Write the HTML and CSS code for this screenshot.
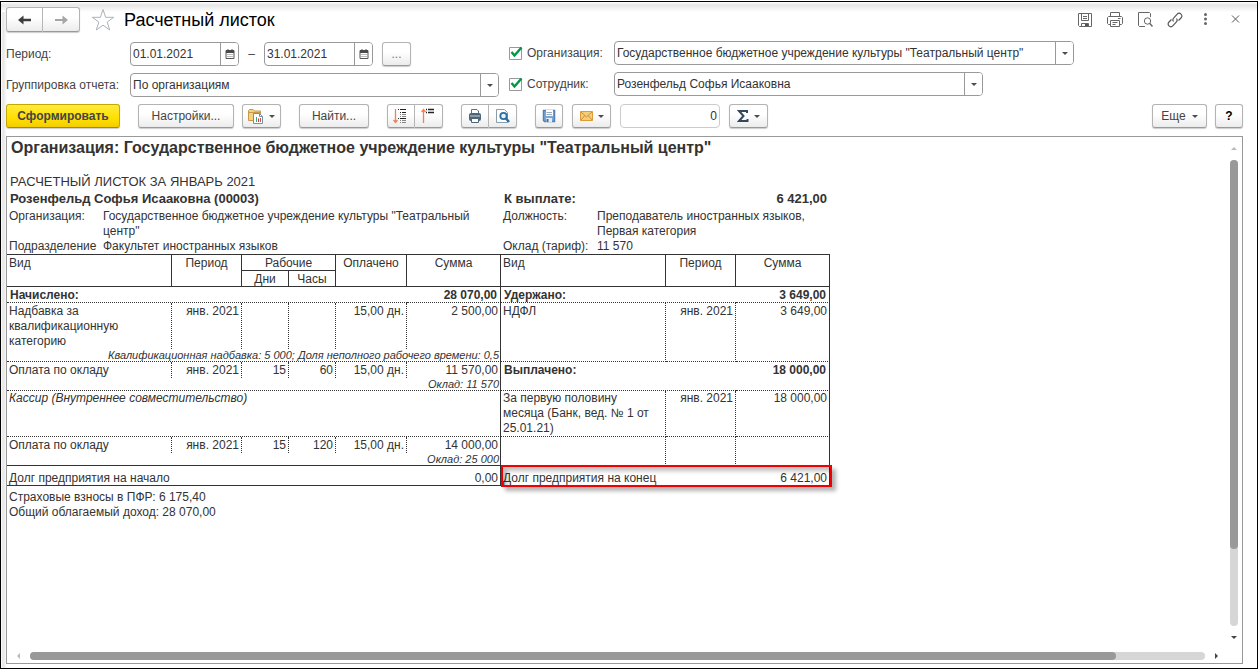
FILE: index.html
```html
<!DOCTYPE html>
<html lang="ru">
<head>
<meta charset="utf-8">
<title>Расчетный листок</title>
<link rel="stylesheet" href="styles.css">
</head>
<body>
<main class="window">
  <header class="titlebar">
    <div class="button-group">
      <button class="btn nav" aria-label="Назад"><svg width="16" height="12" viewBox="0 0 16 12"><path d="M1 6 6.500 1.500V4.800H14V7.200H6.500V10.500Z" fill="#3d3d3d"/></svg></button>
      <button class="btn nav" aria-label="Вперед"><svg width="16" height="12" viewBox="0 0 16 12"><path d="M15 6 9.500 1.500V5H2V7H9.500V10.500Z" fill="#a6a6a6"/></svg></button>
    </div>
    <button class="plain star" aria-label="В избранное"><svg width="24" height="24" viewBox="0 0 24 24"><path d="M12 1.500 14.600 9.300H22.700L16.200 14.100 18.700 22 12 17.200 5.300 22 7.800 14.100 1.300 9.300H9.400Z" fill="#fff" stroke="#a9b2bc"/></svg></button>
    <h1 class="title">Расчетный листок</h1>
    <div class="window-tools">
      <button class="plain" aria-label="Сохранить"><svg width="16" height="16" viewBox="0 0 16 16" fill="none" stroke="#666"><path d="M1.500 1.500H14.500V14.500H2.500L1.500 13.500ZM4.500 1.500V8.500H11.500V1.500M6 4.500H10M6 6.500H10M4.500 14.500V11.500H11.500V14.500"/><path d="M8 12h3v2H8z" fill="#555" stroke="none"/></svg></button>
      <button class="plain" aria-label="Печать"><svg width="16" height="16" viewBox="0 0 16 16" fill="none" stroke="#666"><path d="M3.500 4.500V.500H12.500V4.500M3.500 12.500H1.500L.5 11.500V5.500L1.500 4.500H14.500L15.500 5.500V11.500L14.500 12.500H12.500M3.500 8.500H12.500V14.500H3.500ZM5.500 10.500H10.500M5.500 12.500H8.500M11 6.500H13.500"/></svg></button>
      <button class="plain" aria-label="Просмотр"><svg width="16" height="16" viewBox="0 0 16 16" fill="none" stroke="#666"><path d="M13.500 5V1.500L12.500.500H1.500V13.500L2.500 14.500H8"/><circle cx="10.500" cy="9" r="3.200"/><path d="M12.800 11.500 15.500 14.500" stroke-width="1.500"/></svg></button>
      <button class="plain" aria-label="Ссылка"><svg width="16" height="16" viewBox="0 0 16 16" fill="none" stroke="#555" stroke-width="1.200"><path d="M6.500 9.500C5.500 8.200 5.800 6.900 6.800 5.900L10 2.300C11.200 1 12.800 1 14 2.100 15.200 3.300 15.200 4.800 14 6L11.500 8.500M9.500 6.500C10.500 7.800 10.200 9.100 9.200 10.100L6 13.700C4.800 15 3.200 15 2 13.900.8 12.700.8 11.200 2 10L4.500 7.500"/></svg></button>
      <button class="plain" aria-label="Меню"><svg width="16" height="16" viewBox="0 0 16 16" fill="#666"><circle cx="8.500" cy="2.500" r="1.500"/><circle cx="8.500" cy="7" r="1.500"/><circle cx="8.500" cy="11.500" r="1.500"/></svg></button>
      <button class="plain" aria-label="Закрыть"><svg width="16" height="16" viewBox="0 0 16 16" stroke="#555"><path d="M5 3.500 12 10.500M12 3.500 5 10.500"/></svg></button>
    </div>
  </header>

  <form class="filters">
    <div class="filter-column main-filters">
      <div class="filter-row">
        <label class="name" for="from">Период:</label>
        <span class="field date"><input id="from" value="01.01.2021"><button type="button" aria-label="Календарь"><svg width="10" height="10" viewBox="0 0 10 10"><path d="M1 1.500H9V9.500H1ZM3 0V3M7 0V3" fill="none" stroke="#555"/><path d="M1 1h8v3H1z" fill="#4a4a4a"/><path d="M2.500 5.500h5M2.500 7.500h5" stroke="#777" stroke-dasharray="1 1"/></svg></button></span>
        <span class="dash">–</span>
        <span class="field date"><input id="to" aria-label="Конец периода" value="31.01.2021"><button type="button" aria-label="Календарь"><svg width="10" height="10" viewBox="0 0 10 10"><path d="M1 1.500H9V9.500H1ZM3 0V3M7 0V3" fill="none" stroke="#555"/><path d="M1 1h8v3H1z" fill="#4a4a4a"/><path d="M2.500 5.500h5M2.500 7.500h5" stroke="#777" stroke-dasharray="1 1"/></svg></button></span>
        <button type="button" class="btn more">...</button>
      </div>
      <div class="filter-row">
        <label class="name" for="group">Группировка отчета:</label>
        <span class="field combo"><select id="group"><option>По организациям</option></select><span class="drop"><i class="caret"></i></span></span>
      </div>
    </div>
    <div class="filter-column extra-filters">
      <div class="filter-row">
        <label class="check"><input type="checkbox" checked><span>Организация:</span></label>
        <span class="field combo organization"><input aria-label="Организация" value="Государственное бюджетное учреждение культуры &quot;Театральный центр&quot;"><button type="button" class="drop" aria-label="Выбрать"><i class="caret"></i></button></span>
      </div>
      <div class="filter-row">
        <label class="check"><input type="checkbox" checked><span>Сотрудник:</span></label>
        <span class="field combo employee"><input aria-label="Сотрудник" value="Розенфельд Софья Исааковна"><button type="button" class="drop" aria-label="Выбрать"><i class="caret"></i></button></span>
      </div>
    </div>
  </form>

  <div class="toolbar">
    <button class="btn primary">Сформировать</button>
    <div class="tools">
      <button class="btn settings">Настройки...</button>
      <button class="btn menu" aria-label="Варианты"><svg width="16" height="16" viewBox="0 0 16 16"><path d="M.5 12.500V2.500L1.500 1.500H5L6.500 3H12.500V12.500Z" fill="#f5d183" stroke="#c89a45"/><path d="M1 4.500H12" stroke="#c89a45"/><path d="M5.500 5.500H11.500L14.500 8.500V15.500H5.500Z" fill="#fff" stroke="#7890a5"/><path d="M11.500 5.500V8.500H14.500" fill="none" stroke="#7890a5"/><path d="M8.500 9V14" stroke="#3a7"/><path d="M10.500 10.500V14" stroke="#d33"/><path d="M12.500 10V14" stroke="#b55"/></svg><i class="caret"></i></button>
    </div>
    <button class="btn find">Найти...</button>
    <div class="button-group">
      <button class="btn icon" aria-label="Развернуть группы"><svg width="16" height="16" viewBox="0 0 16 16"><path d="M2.500 1V14M.5 12 2.500 14.500 4.500 12" fill="none" stroke="#f0824a" stroke-width="1.300"/><path d="M5 1.500H6M7 1.500H13M7 4.500H8M9 4.500H13" stroke="#222"/><path d="M7 6.500H8M9 6.500H13M7 8.500H8M9 8.500H13" stroke="#888"/><path d="M5 10.500H6M7 10.500H13" stroke="#222"/><path d="M7 12.500H8M9 12.500H13M7 14.500H8M9 14.500H13" stroke="#888"/></svg></button>
      <button class="btn icon" aria-label="Свернуть группы"><svg width="16" height="16" viewBox="0 0 16 16"><path d="M2.500 15V2M.5 4 2.500 1.500 4.500 4" fill="none" stroke="#f0824a" stroke-width="1.300"/><path d="M5 1.500H6M7 1.500H13M5 4.500H6M7 4.500H13" stroke="#222" stroke-width="1.400"/></svg></button>
    </div>
    <div class="button-group">
      <button class="btn icon" aria-label="Печать"><svg width="16" height="16" viewBox="0 0 16 16"><path d="M4.500 6V1.500H10L11.500 3V6" fill="#fff" stroke="#5b7386"/><rect x="2" y="5" width="12" height="8" rx="2" fill="#4d6578"/><path d="M3 8H13" stroke="#c2d4e2"/><path d="M4.500 10.500H11.500V14.500H4.500Z" fill="#fff" stroke="#4d6578"/></svg></button>
      <button class="btn icon" aria-label="Предварительный просмотр"><svg width="16" height="16" viewBox="0 0 16 16"><path d="M1.500 1.500H9.500L12.500 4.500V14.500H1.500Z" fill="#fff" stroke="#8b9cab"/><circle cx="8.500" cy="8" r="3.200" fill="#e4f3fb" stroke="#2b6f9d" stroke-width="1.800"/><path d="M11 10.500 14 14" stroke="#2b6f9d" stroke-width="2.500"/></svg></button>
    </div>
    <div class="tools values">
      <button class="btn icon" aria-label="Сохранить отчет"><svg width="14" height="14" viewBox="0 0 14 14"><path d="M1.500 1.500H12.500V12.500H2.500L1.500 11.500Z" fill="#78a8d5" stroke="#5580b5" stroke-width="1.500"/><path d="M4 1h7v6H4z" fill="#fff"/><path d="M4.500 3.500H10M4.500 5.500H10" stroke="#9ab"/><path d="M4 9h6v4H4z" fill="#e5edf4"/><path d="M4.500 10h2v3h-2z" fill="#446a98"/></svg></button>
      <button class="btn menu" aria-label="Отправить"><svg width="13" height="10" viewBox="0 0 13 10"><path d="M.5.500H12.500V9.500H.5Z" fill="#f6cd7a" stroke="#dd9c37"/><path d="M1 1 6.500 6 12 1M1 9 4.800 4.500M12 9 8.200 4.500" fill="none" stroke="#d08f30"/></svg><i class="caret"></i></button>
      <input class="sum" aria-label="Сумма выделенных" value="0">
      <button class="btn menu" aria-label="Функция"><svg width="12" height="14" viewBox="0 0 12 14"><path d="M10 4V2H2L6.500 7 2 12H10.500V10" fill="none" stroke="#33485c" stroke-width="2"/></svg><i class="caret"></i></button>
    </div>
    <div class="tools trailing">
      <button class="btn other">Еще<i class="caret"></i></button>
      <button class="btn icon help">?</button>
    </div>
  </div>

  <section class="viewer">
    <article class="report">
      <h2 class="report-title">Организация: Государственное бюджетное учреждение культуры "Театральный центр"</h2>
      <p class="slip-title">РАСЧЕТНЫЙ ЛИСТОК ЗА ЯНВАРЬ 2021</p>
      <div class="slip-head">
        <strong class="person">Розенфельд Софья Исааковна (00003)</strong>
        <strong>К выплате:</strong><strong class="pay">6 421,00</strong>
        <span>Организация:</span><span class="org-name">Государственное бюджетное учреждение культуры "Театральный центр"</span>
        <span>Должность:</span><span>Преподаватель иностранных языков, Первая категория</span>
        <span>Подразделение</span><span>Факультет иностранных языков</span>
        <span>Оклад (тариф):</span><span>11 570</span>
      </div>
      <table class="slip">
        <colgroup><col class="kind"><col class="period"><col class="time"><col class="time"><col class="paid"><col class="amount"><col class="kind"><col class="period"><col class="amount"></colgroup>
        <thead>
          <tr><th rowspan="2" class="left">Вид</th><th rowspan="2">Период</th><th colspan="2">Рабочие</th><th rowspan="2">Оплачено</th><th rowspan="2">Сумма</th><th rowspan="2" class="left">Вид</th><th rowspan="2">Период</th><th rowspan="2">Сумма</th></tr>
          <tr><th>Дни</th><th>Часы</th></tr>
        </thead>
        <tbody>
          <tr class="total"><td colspan="5" class="open">Начислено:</td><td class="num edge">28 070,00</td><td colspan="2" class="open">Удержано:</td><td class="num edge">3 649,00</td></tr>
          <tr class="entry"><td class="wrap">Надбавка за квалификационную категорию</td><td class="num">янв. 2021</td><td></td><td></td><td class="num">15,00 дн.</td><td class="num edge">2 500,00</td><td rowspan="2" class="line">НДФЛ</td><td rowspan="2" class="num line">янв. 2021</td><td rowspan="2" class="num edge line">3 649,00</td></tr>
          <tr class="note"><td colspan="6" class="num edge">Квалификационная надбавка: 5 000; Доля неполного рабочего времени: 0,5</td></tr>
          <tr class="entry"><td>Оплата по окладу</td><td class="num">янв. 2021</td><td class="num">15</td><td class="num">60</td><td class="num">15,00 дн.</td><td class="num edge">11 570,00</td><td rowspan="2" colspan="2" class="open line strong">Выплачено:</td><td rowspan="2" class="num edge line strong">18 000,00</td></tr>
          <tr class="note"><td colspan="6" class="num edge">Оклад: 11 570</td></tr>
          <tr class="position"><td colspan="6" class="edge job">Кассир (Внутреннее совместительство)</td><td class="wrap">За первую половину месяца (Банк, вед. № 1 от 25.01.21)</td><td class="num">янв. 2021</td><td class="num edge">18 000,00</td></tr>
          <tr class="entry"><td>Оплата по окладу</td><td class="num">янв. 2021</td><td class="num">15</td><td class="num">120</td><td class="num">15,00 дн.</td><td class="num edge">14 000,00</td><td rowspan="2" class="solid"></td><td rowspan="2" class="solid"></td><td rowspan="2" class="edge solid"></td></tr>
          <tr class="note"><td colspan="6" class="num edge solid">Оклад: 25 000</td></tr>
          <tr class="debt"><td colspan="5" class="open solid">Долг предприятия на начало</td><td class="num edge solid">0,00</td><td colspan="3" class="edge solid marked"><div class="split"><span>Долг предприятия на конец</span><span>6 421,00</span></div></td></tr>
        </tbody>
      </table>
      <p class="summary">Страховые взносы в ПФР: 6 175,40<br>Общий облагаемый доход: 28 070,00</p>
    </article>
    <div class="scroll vertical"><i class="arrow up"></i><div class="track"><div class="thumb"></div></div><i class="arrow down"></i></div>
    <div class="scroll horizontal"><i class="arrow back"></i><div class="track"><div class="thumb"></div></div><i class="arrow forth"></i></div>
  </section>
</main>
</body>
</html>
```
FILE: styles.css
```css
* { box-sizing: border-box; }

body {
  margin: 0;
  padding-top: 1px;
  height: 100vh;
  background: #fff;
  color: #444;
  font: 12px/15px "Liberation Sans", Arial, sans-serif;
}

button, input, select { font: inherit; color: inherit; margin: 0; }
button { padding: 0; cursor: pointer; }
svg { display: block; flex: none; }

.window {
  display: flex;
  flex-direction: column;
  height: 100%;
  padding: 5px 14px 4px 5px;
  border: 1px solid #000;
  background:
    linear-gradient(to bottom, #fff 0, #e6e6e6 3px, #fff 10px) top / 100% 10px no-repeat,
    linear-gradient(to right, #fff 0, #e4e4e4 2px, #fff 6px) left / 6px 100% no-repeat,
    #fff;
}

/* Buttons */
.btn {
  display: flex;
  align-items: center;
  justify-content: center;
  height: 24px;
  border: 1px solid #b3b3b3;
  border-bottom-color: #999;
  border-radius: 3px;
  background: linear-gradient(#fff 40%, #ececec);
  box-shadow: 0 1px 1px #ccc;
}
.plain { border: 0; background: none; }
.button-group { display: flex; }
.button-group .btn:first-child { border-radius: 3px 0 0 3px; }
.button-group .btn:last-child { border-radius: 0 3px 3px 0; border-left: 0; }
.caret {
  width: 0;
  border: 3px solid transparent;
  border-top-color: #4d4d4d;
  border-bottom: 0;
}

/* Title */
.titlebar { display: flex; align-items: center; height: 25px; }
.nav { width: 37px; height: 25px; }
.star { margin: 0 9px 0 11px; }
.title { margin: 0; color: #000; font-size: 18px; line-height: 24px; font-weight: 400; }
.window-tools { display: flex; gap: 14px; margin-left: auto; }

/* Filters */
.filters { display: flex; gap: 10px; margin-top: 9px; }
.filter-column { display: flex; flex-direction: column; gap: 7px; }
.main-filters { flex: 0 0 493px; margin-top: 1px; }
.extra-filters { flex: 1; }
.filter-row { display: flex; align-items: center; }
.name { flex: 0 0 124px; white-space: nowrap; }
.field {
  display: flex;
  height: 24px;
  border: 1px solid #999;
  border-radius: 4px;
  background: #fff;
  color: #333;
  overflow: hidden;
}
.field input, .field select {
  flex: 1;
  min-width: 0;
  padding: 0 2px;
  border: 0;
  outline: 0;
  background: none;
  appearance: none;
}
.field button, .drop {
  display: flex;
  flex: none;
  align-items: center;
  justify-content: center;
  width: 18px;
  border: 0;
  border-left: 1px solid #999;
  background: #fff;
}
.date { width: 109px; }
.dash { width: 25px; text-align: center; }
.more { width: 29px; margin-left: 9px; color: #777; }
.combo { flex: 1; }
.organization { max-width: 460px; }
.employee { max-width: 369px; }
.check { display: flex; align-items: center; flex: 0 0 105px; gap: 4px; }
.check input {
  flex: none;
  width: 14px;
  height: 14px;
  appearance: none;
  background: url("data:image/svg+xml,%3Csvg xmlns='http://www.w3.org/2000/svg' viewBox='0 0 14 14'%3E%3Cpath d='M.5 1.500H12.500V13.500H.5Z' fill='white' stroke='%23999'/%3E%3Cpath d='M2.500 6 5.500 9.500 12.500 1.500' fill='none' stroke='%23009646' stroke-width='2.400'/%3E%3C/svg%3E");
}

/* Toolbar */
.toolbar { display: flex; gap: 18px; margin-top: 7px; }
.tools { display: flex; gap: 8px; }
.values { gap: 9px; }
.primary {
  width: 114px;
  border-color: #c7a600;
  border-bottom-color: #a58b00;
  background: linear-gradient(#ffeb3c, #ffdf00 60%, #f3cd00);
  font-weight: 700;
}
.settings { width: 96px; }
.menu { width: 39px; gap: 5px; }
.find { width: 70px; }
.icon { width: 28px; }
.sum {
  width: 100px;
  height: 24px;
  padding: 0 2px;
  border: 1px solid #ccc;
  border-radius: 4px;
  color: #333;
  text-align: right;
}
.trailing { margin-left: auto; }
.other { width: 55px; gap: 6px; }
.help { color: #000; font-weight: 700; }

/* Report */
.viewer {
  display: grid;
  grid-template: minmax(0, 1fr) 15px / minmax(0, 1fr) 16px;
  flex: 1;
  min-height: 0;
  margin-top: 8px;
  border: 1px solid #999;
  background: #fff;
}
.report { overflow: hidden; color: #333; }
.report-title { margin: 0; padding-left: 4px; font-size: 16px; line-height: 21px; }
.slip-title { margin: 16px 0 0; padding-left: 3px; font-size: 13px; line-height: 16px; }
.slip-head {
  display: grid;
  grid-template-columns: 94px 400px 94px 231px;
  width: 823px;
  padding-left: 2px;
}
.slip-head strong { padding: 1px 1px 2px; font-size: 13px; line-height: 16px; }
.slip-head .person { grid-column: span 2; }
.slip-head .pay { text-align: right; }
.org-name { max-width: 380px; }
.slip {
  width: 823px;
  table-layout: fixed;
  border-collapse: separate;
  border-spacing: 0;
  border-top: 1px solid #333;
}
.kind { width: 165px; }
.period { width: 70px; }
.time { width: 47px; }
.paid { width: 71px; }
.amount { width: 94px; }
.slip th, .slip td {
  height: 16px;
  padding: 1px 2px 0;
  border: 0 solid #333;
  border-width: 0 1px 1px 0;
  line-height: 14px;
  text-align: center;
  vertical-align: top;
  font-weight: 400;
}
.slip td { border-style: dotted; text-align: left; }
.slip td.num { text-align: right; }
.slip th.left { text-align: left; }
.slip td.open { border-right: 0; }
.slip td.edge { border-right-style: solid; }
.slip td.solid { border-bottom-style: solid; }
.slip td.wrap { padding-right: 12px; line-height: 15px; }
.slip .position td { padding-top: 0; line-height: 15px; }
.slip .total td, .slip td.strong { padding: 1px 3px 0; font-weight: 700; }
.slip .entry td:not(.line):not(.solid) { border-bottom: 0; }
.slip .note td { height: 13px; padding: 1px 1px 0; font-size: 11px; line-height: 11px; font-style: italic; }
.slip td.job { font-style: italic; }
.slip .debt td { height: 20px; vertical-align: bottom; }
.slip td.marked { position: relative; }
.marked::after {
  content: "";
  position: absolute;
  inset: -1px -3px -2px 0;
  border: 2px solid #f00000;
  box-shadow: 4px 4px 4px rgba(0, 0, 0, .3), inset 4px 4px 4px rgba(0, 0, 0, .25);
}
.split { display: flex; justify-content: space-between; }
.summary { margin: 4px 0 0; padding-left: 2px; }

/* Scroll bars */
.scroll { display: flex; align-items: center; }
.track { flex: 1; border-radius: 4px; background: #d6d6d6; }
.thumb { border-radius: 4px; background: #999; }
.arrow { width: 0; border: 3px solid transparent; }
.vertical { flex-direction: column; gap: 10px; padding: 7px 0 6px; }
.vertical .track { width: 8px; }
.vertical .thumb { height: 83.5%; }
.horizontal { gap: 10px; padding: 0 5px 0 7px; }
.horizontal .track { height: 8px; }
.horizontal .thumb { width: 92.400%; height: 8px; }
.up { border-bottom-color: #bbb; }
.down { border-top-color: #444; }
.back { border-right-color: #bbb; }
.forth { border-left-color: #444; }
```
